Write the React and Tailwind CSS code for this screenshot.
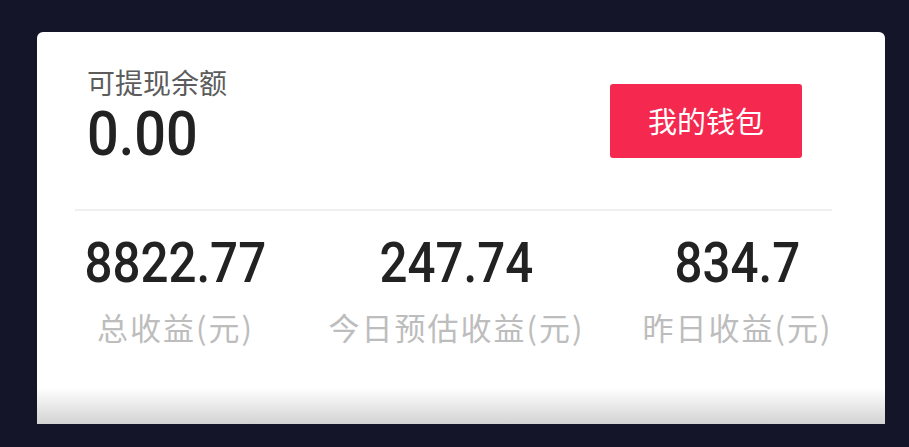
const numFont = { fontFamily: 'Roboto, "Noto Sans", sans-serif' }

const stats = [
  { value: "8822.77", label: "总收益(元)" },
  { value: "247.74", label: "今日预估收益(元)" },
  { value: "834.7", label: "昨日收益(元)" },
]

export default function App() {
  return (
    <div
      className="h-[447px] w-[909px] overflow-hidden bg-[#141529] pt-[32px] pl-[37px]"
      style={{ fontFamily: '"Noto Sans CJK SC", "Noto Sans", sans-serif' }}
    >
      <div className="flex h-[392px] w-[848px] flex-col overflow-hidden rounded-t-[6px] bg-white">
        <div className="flex items-start justify-between pl-[50px] pr-[83px] pt-[36px]">
          <div>
            <div className="text-[28px] leading-[28px] text-[#5c5c5c]">可提现余额</div>
            <div
              className="mt-[7px] origin-left scale-x-[0.9] text-[62px] leading-[62px] font-medium text-[#222]"
              style={numFont}
            >
              0.00
            </div>
          </div>
          <button className="mt-[16px] flex h-[74px] w-[192px] items-center justify-center rounded-[3px] bg-[#f5284f] text-[29px] text-white">
            我的钱包
          </button>
        </div>

        <div className="mt-[44px] ml-[38px] h-[2px] w-[757px] bg-[#efefef]" />

        <div className="-ml-[2px] mt-[24px] grid w-[843px] grid-cols-3">
          {stats.map((s) => (
            <div key={s.label} className="flex flex-col items-center">
              <div
                className="scale-x-[0.88] text-[56px] leading-[56px] font-medium text-[#222]"
                style={numFont}
              >
                {s.value}
              </div>
              <div className="mt-[20px] text-[31px] leading-[31px] tracking-[2px] text-[#bdbdbd]">
                {s.label}
              </div>
            </div>
          ))}
        </div>

        <div className="mt-auto h-[36px] bg-gradient-to-b from-white to-[#d3d3d3]" />
      </div>
    </div>
  )
}
